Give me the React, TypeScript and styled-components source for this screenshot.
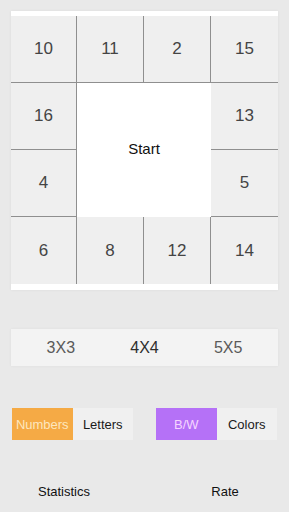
import React from 'react';
import styled, { createGlobalStyle } from 'styled-components';

const GlobalStyle = createGlobalStyle`
  html, body {
    margin: 0;
    padding: 0;
    background: #e9e9e9;
    font-family: 'Liberation Sans', Arial, sans-serif;
  }
`;

const cells: { value: string; col: number; row: number }[] = [
  { value: '10', col: 1, row: 1 },
  { value: '11', col: 2, row: 1 },
  { value: '2', col: 3, row: 1 },
  { value: '15', col: 4, row: 1 },
  { value: '16', col: 1, row: 2 },
  { value: '13', col: 4, row: 2 },
  { value: '4', col: 1, row: 3 },
  { value: '5', col: 4, row: 3 },
  { value: '6', col: 1, row: 4 },
  { value: '8', col: 2, row: 4 },
  { value: '12', col: 3, row: 4 },
  { value: '14', col: 4, row: 4 },
];

const App: React.FC = () => {
  return (
    <>
      <GlobalStyle />
      <Page>
        <Board>
          <Grid>
            {cells.map((c) => (
              <Cell key={c.value} col={c.col} row={c.row}>
                {c.value}
              </Cell>
            ))}
            <StartCell>Start</StartCell>
          </Grid>
        </Board>

        <SizeBar>
          <SizeOption>3X3</SizeOption>
          <SizeOption active>4X4</SizeOption>
          <SizeOption>5X5</SizeOption>
        </SizeBar>

        <ToggleRow>
          <Toggle>
            <ToggleOption activeColor="#f5aa45" activeText="#fde7bf">Numbers</ToggleOption>
            <ToggleOption>Letters</ToggleOption>
          </Toggle>
          <Toggle>
            <ToggleOption activeColor="#b571f7" activeText="#f5d6ff">B/W</ToggleOption>
            <ToggleOption>Colors</ToggleOption>
          </Toggle>
        </ToggleRow>

        <Footer>
          <FooterLink>Statistics</FooterLink>
          <FooterLink>Rate</FooterLink>
        </Footer>
      </Page>
    </>
  );
};

const Page = styled.div`
  width: 289px;
  height: 512px;
  box-sizing: border-box;
  padding: 11px 11px 0 11px;
  display: flex;
  flex-direction: column;
`;

const Board = styled.div`
  background: #ffffff;
  padding: 5px 0 6px 0;
  box-shadow: 0 0 3px rgba(0, 0, 0, 0.06);
`;

const Grid = styled.div`
  display: grid;
  grid-template-columns: 66px 67px 67px 67px;
  grid-template-rows: repeat(4, 67px);
`;

const Cell = styled.div<{ col: number; row: number }>`
  grid-column: ${(p) => p.col};
  grid-row: ${(p) => p.row};
  background: #efefef;
  box-sizing: border-box;
  border-right: ${(p) => (p.col < 4 ? '1px solid #8f8f8f' : 'none')};
  border-left: ${(p) => (p.col === 4 ? '1px solid #8f8f8f' : 'none')};
  border-bottom: ${(p) => (p.row < 4 ? '1px solid #8f8f8f' : 'none')};
  display: flex;
  align-items: center;
  justify-content: center;
  font-size: 17px;
  color: #444444;
  ${(p) => (p.col === 4 ? 'margin-left: -1px;' : '')}
`;

const StartCell = styled.div`
  grid-column: 2 / span 2;
  grid-row: 2 / span 2;
  background: #ffffff;
  display: flex;
  align-items: center;
  justify-content: center;
  padding-bottom: 3px;
  font-size: 15px;
  color: #111111;
`;

const SizeBar = styled.div`
  margin-top: 39px;
  height: 37px;
  background: #f3f3f3;
  display: flex;
  align-items: center;
  justify-content: space-around;
  padding: 0 8px;
  box-shadow: 0 0 3px rgba(0, 0, 0, 0.05);
`;

const SizeOption = styled.div<{ active?: boolean }>`
  font-size: 16px;
  color: ${(p) => (p.active ? '#2e2e2e' : '#5a5a5a')};
`;

const ToggleRow = styled.div`
  margin-top: 42px;
  display: flex;
  justify-content: space-between;
  padding: 0 1px;
`;

const Toggle = styled.div`
  display: flex;
  width: 121px;
  height: 32px;
  background: #f0f0f0;
`;

const ToggleOption = styled.div<{ activeColor?: string; activeText?: string }>`
  flex: 1;
  display: flex;
  align-items: center;
  justify-content: center;
  font-size: 13px;
  background: ${(p) => p.activeColor || 'transparent'};
  color: ${(p) => p.activeText || '#1a1a1a'};
`;

const Footer = styled.div`
  margin-top: 44px;
  display: flex;
  justify-content: space-between;
`;

const FooterLink = styled.div`
  width: 106px;
  text-align: center;
  font-size: 13px;
  color: #111111;
`;

export default App;
